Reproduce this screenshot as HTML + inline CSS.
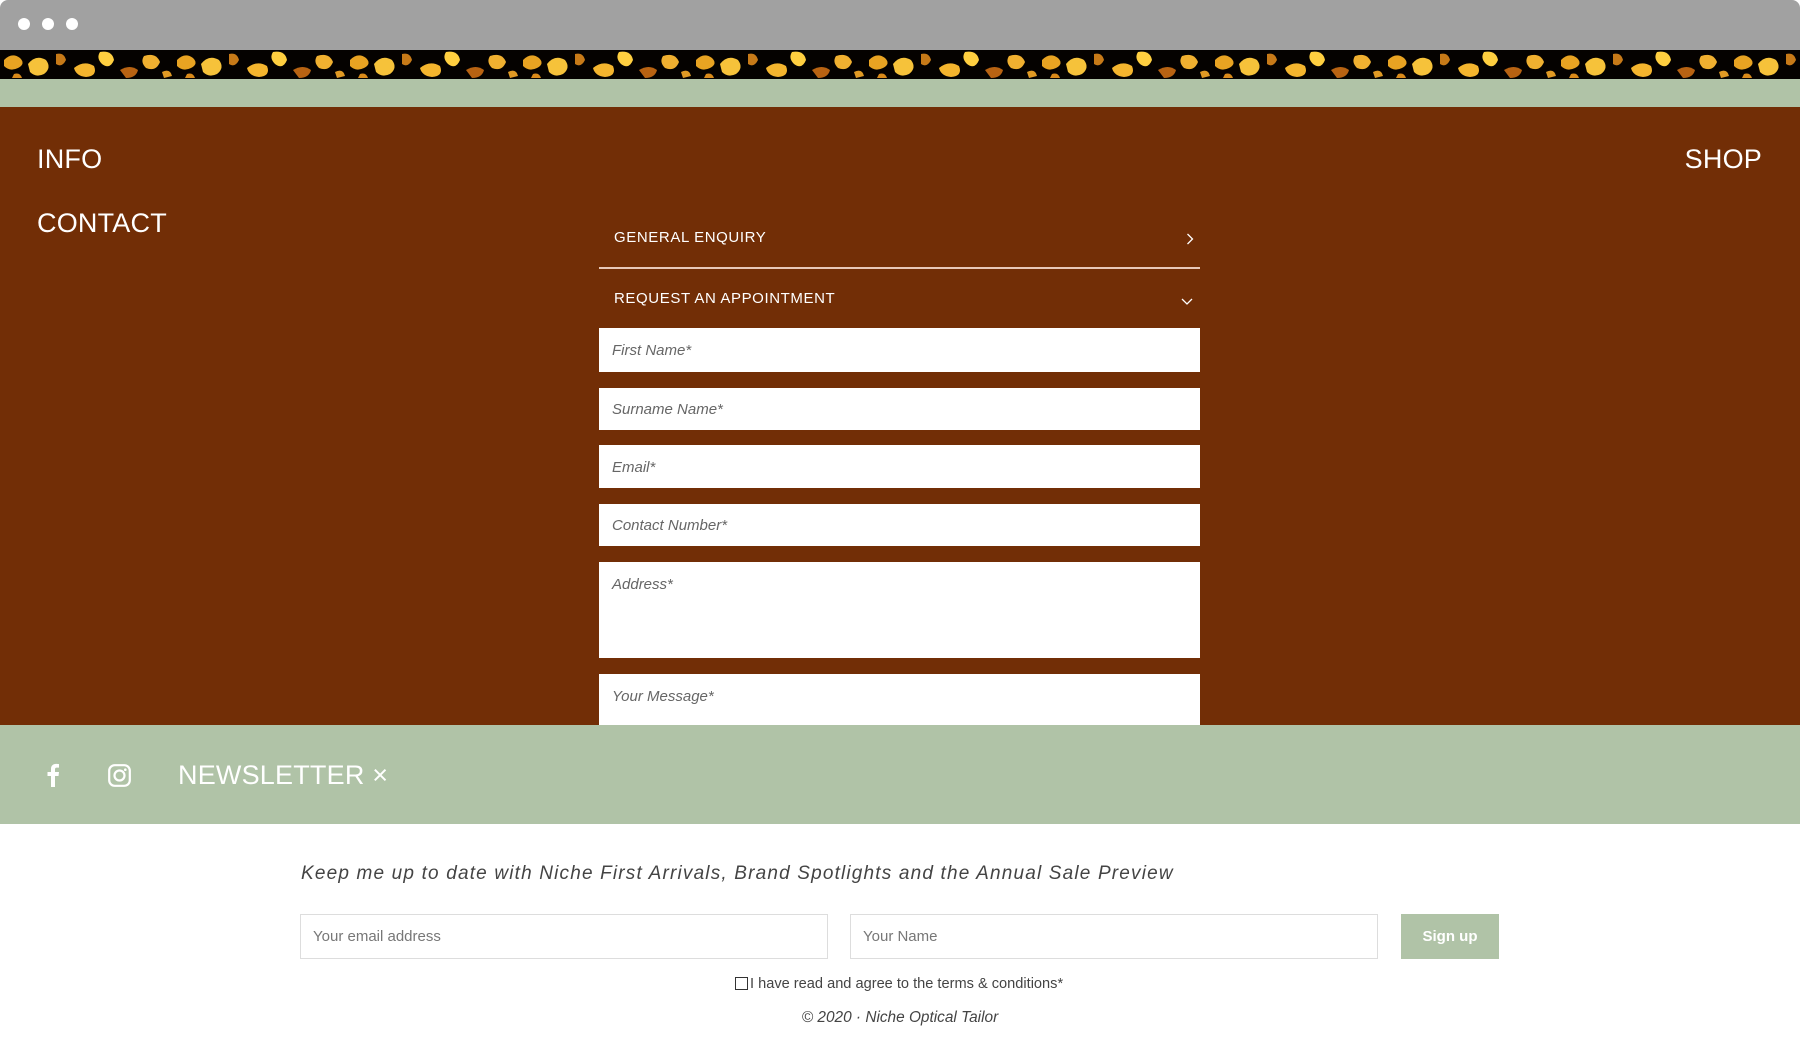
<!DOCTYPE html>
<html><head><meta charset="utf-8"><style>
*{margin:0;padding:0;box-sizing:border-box}
body{width:1800px;height:1063px;overflow:hidden;background:#fff;font-family:"Liberation Sans",sans-serif;position:relative}
.abs{position:absolute}
.top{left:0;top:0;width:1800px;height:50px;background:#a1a1a1;border-radius:8px 8px 0 0}
.dot{width:12px;height:12px;border-radius:50%;background:#fff;top:18px}
.leo{left:0;top:50px;width:1800px;height:29px;background:#000}
.g1{left:0;top:79px;width:1800px;height:28px;background:#b0c3a7}
.brown{left:0;top:107px;width:1800px;height:618px;background:#722e06}
.nav{color:#fff;font-size:27px;letter-spacing:0.2px}
.acc{color:#fff;font-size:15px;letter-spacing:0.6px}
.inp{left:599px;width:601px;background:#fff;color:#666;font-style:italic;font-size:15px;padding:0 13px}
.g2{left:0;top:725px;width:1800px;height:99px;background:#b0c3a7}
.field{border:1px solid #ddd;background:#fff;color:#777;font-size:15px;padding-left:12px;line-height:44px;height:45px;top:914px}
</style></head><body>
<div class="abs top"></div>
<div class="abs dot" style="left:18px"></div>
<div class="abs dot" style="left:42px"></div>
<div class="abs dot" style="left:66px"></div>
<svg class="abs leo" width="1800" height="29" viewBox="0 0 1800 29">
<defs><pattern id="p" width="173" height="29" patternUnits="userSpaceOnUse">
<rect width="173" height="29" fill="#050200"/>
<path d="M4 10 Q12 2 20 8 Q26 14 18 18 Q10 22 4 16Z" fill="#e8a322"/>
<path d="M28 14 Q36 4 46 10 Q52 18 44 24 Q36 28 30 22Z" fill="#f6c23a"/>
<path d="M56 4 Q64 2 66 10 Q62 18 56 14Z" fill="#c77a18"/>
<path d="M74 18 Q84 10 94 16 Q98 26 86 27 Q76 26 74 18Z" fill="#f4b52e"/>
<path d="M100 2 Q112 0 114 10 Q110 20 102 14 Q96 8 100 2Z" fill="#ffcf40"/>
<path d="M120 20 Q130 14 138 20 Q136 28 126 28Z" fill="#b86312"/>
<path d="M144 6 Q156 2 160 12 Q156 22 146 18 Q140 12 144 6Z" fill="#f0b030"/>
<path d="M162 22 Q170 18 172 26 L164 28Z" fill="#e09a24"/>
<path d="M14 24 Q20 22 22 28 L12 28Z" fill="#d98a1a"/>
</pattern></defs>
<rect width="1800" height="29" fill="url(#p)"/></svg>
<div class="abs g1"></div>
<div class="abs brown"></div>
<div class="abs nav" style="left:37px;top:144px">INFO</div>
<div class="abs nav" style="left:37px;top:208px">CONTACT</div>
<div class="abs nav" style="right:38px;top:144px">SHOP</div>
<div class="abs acc" style="left:614px;top:229px">GENERAL ENQUIRY</div>
<svg class="abs" style="left:1186px;top:233px" width="8" height="12"><path d="M1.5 1 L6.5 6 L1.5 11" stroke="#fff" stroke-width="1.3" fill="none"/></svg>
<div class="abs" style="left:599px;top:267px;width:601px;height:2px;background:#e8c8b8"></div>
<div class="abs acc" style="left:614px;top:290px">REQUEST AN APPOINTMENT</div>
<svg class="abs" style="left:1181px;top:298px" width="12" height="8"><path d="M1 1 L6 6 L11 1" stroke="#fff" stroke-width="1.3" fill="none"/></svg>
<div class="abs inp" style="top:328px;height:44px;line-height:46px">First Name*</div>
<div class="abs inp" style="top:388px;height:42px;line-height:44px">Surname Name*</div>
<div class="abs inp" style="top:445px;height:43px;line-height:45px">Email*</div>
<div class="abs inp" style="top:504px;height:42px;line-height:44px">Contact Number*</div>
<div class="abs inp" style="top:562px;height:96px;padding-top:14px">Address*</div>
<div class="abs inp" style="top:674px;height:51px;padding-top:14px">Your Message*</div>
<div class="abs g2"></div>
<svg class="abs" style="left:46px;top:763px" width="14" height="24" viewBox="0 0 14 24"><path d="M9 24V13h3.5l.5-4H9V6.5C9 5.3 9.4 4.6 11 4.6h2V1.1C12.6 1 11.4.9 10 .9 7.1.9 5 2.7 5 6v3H1.5v4H5v11z" fill="#fff"/></svg>
<svg class="abs" style="left:108px;top:764px" width="23" height="23" viewBox="0 0 23 23"><rect x="1.2" y="1.2" width="20.6" height="20.6" rx="5.5" fill="none" stroke="#fff" stroke-width="2.2"/><circle cx="11.5" cy="11.5" r="5" fill="none" stroke="#fff" stroke-width="2.2"/><circle cx="17.3" cy="5.7" r="1.3" fill="#fff"/></svg>
<div class="abs nav" style="left:178px;top:760px">NEWSLETTER ×</div>
<div class="abs" style="left:301px;top:863px;font-size:19px;font-style:italic;color:#444;letter-spacing:1.17px">Keep me up to date with Niche First Arrivals, Brand Spotlights and the Annual Sale Preview</div>
<div class="abs field" style="left:300px;width:528px">Your email address</div>
<div class="abs field" style="left:850px;width:528px">Your Name</div>
<div class="abs" style="left:1401px;top:914px;width:98px;height:45px;background:#b0c3a7;color:#fff;font-weight:bold;font-size:15px;text-align:center;line-height:45px">Sign up</div>
<div class="abs" style="left:735px;top:976px;font-size:14.6px;color:#444;white-space:nowrap"><span style="display:inline-block;width:13px;height:13px;border:1px solid #333;vertical-align:-2px;margin-right:2px"></span>I have read and agree to the terms &amp; conditions*</div>
<div class="abs" style="left:0;width:1800px;text-align:center;top:1009px;font-size:15.4px;font-style:italic;color:#444">© 2020 · Niche Optical Tailor</div>
</body></html>
